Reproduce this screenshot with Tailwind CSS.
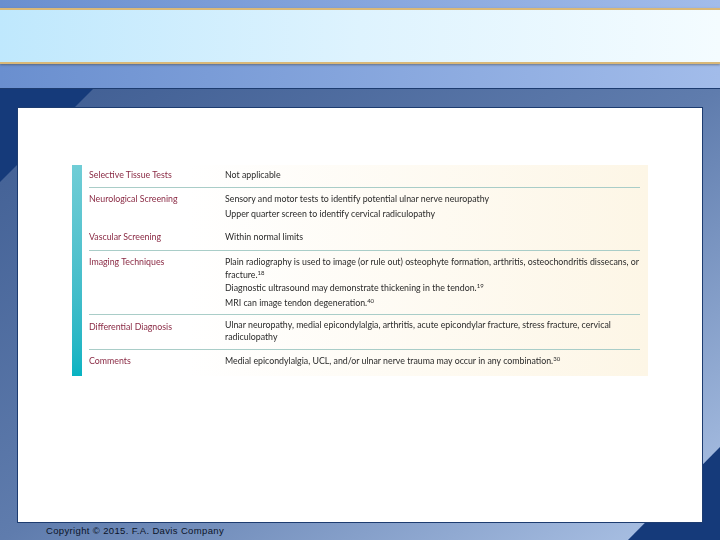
<!DOCTYPE html>
<html lang="en">
<head>
    <meta charset="UTF-8">
    <title>Slide</title>
    <script src="https://cdn.jsdelivr.net/npm/@tailwindcss/browser@4"></script>
</head>
<body class="w-[720px] h-[540px] overflow-hidden bg-white font-['Liberation_Sans',sans-serif]">
<div class="relative w-[720px] h-[540px] flex flex-col bg-linear-to-r from-[#6a8fcf] to-[#a2bcea]">
    <!-- title band -->
    <div class="h-[8px] shrink-0"></div>
    <div class="h-[56px] shrink-0 border-y-2 border-[#d9b878] bg-linear-to-r from-[#bfe8fd] via-[#def3fe] to-[#f4fcff] shadow-[0_1px_2px_rgba(60,60,60,0.5)]"></div>
    <div class="h-[24px] shrink-0"></div>

    <!-- lower panel -->
    <div class="relative flex-1 border-t border-[#1d3c70] bg-linear-to-br from-[#3f5d92] via-[#5f7cad] to-[#b0c6e8] overflow-hidden">
        <svg class="absolute inset-0" width="720" height="452" viewBox="0 0 720 452">
            <polygon points="0,0 93,0 0,93" fill="#153a7a"/>
            <polygon points="720,358 720,452 627,452" fill="#153a7a"/>
        </svg>
        <div class="relative ml-[17px] mt-[18px] w-[686px] h-[416px] bg-white border border-[#1d3c70] pt-[57px] pl-[54px]">
            <div class="flex w-[576px] h-[211px] bg-linear-to-r from-white from-20% to-[#fdf6e6]">
                <div class="w-[10px] shrink-0 bg-linear-to-b from-[#70cdd6] to-[#06b3c2]"></div>
                <div class="flex-1 pl-[7px] pr-[8px] font-['Lato',sans-serif] text-[8.8px] leading-[15px] text-[#2a2a2a] blur-[0.3px]">
                    <div class="flex h-[23px] pt-[2px] border-b border-[#a9cdc8]">
                        <div class="w-[136px] text-[#8a2a44]">Selective Tissue Tests</div>
                        <div>Not applicable</div>
                    </div>
                    <div class="flex h-[41px] pt-[3px]">
                        <div class="w-[136px] text-[#8a2a44]">Neurological Screening</div>
                        <div>Sensory and motor tests to identify potential ulnar nerve neuropathy<br>Upper quarter screen to identify cervical radiculopathy</div>
                    </div>
                    <div class="flex h-[22px] border-b border-[#a9cdc8]">
                        <div class="w-[136px] text-[#8a2a44]">Vascular Screening</div>
                        <div>Within normal limits</div>
                    </div>
                    <div class="flex h-[64px] pt-[4px] border-b border-[#a9cdc8]">
                        <div class="w-[136px] text-[#8a2a44] -mt-[1px]">Imaging Techniques</div>
                        <div class="flex-1 leading-[13px]">
                            <div>Plain radiography is used to image (or rule out) osteophyte formation, arthritis, osteochondritis dissecans, or fracture.<sup class="text-[6px] leading-none">18</sup></div>
                            <div>Diagnostic ultrasound may demonstrate thickening in the tendon.<sup class="text-[6px] leading-none">19</sup></div>
                            <div class="mt-[1.5px]">MRI can image tendon degeneration.<sup class="text-[6px] leading-none">40</sup></div>
                        </div>
                    </div>
                    <div class="flex h-[35px] pt-[4px] border-b border-[#a9cdc8]">
                        <div class="w-[136px] text-[#8a2a44]">Differential Diagnosis</div>
                        <div class="flex-1 leading-[12px]">Ulnar neuropathy, medial epicondylalgia, arthritis, acute epicondylar fracture, stress fracture, cervical radiculopathy</div>
                    </div>
                    <div class="flex pt-[3px]">
                        <div class="w-[136px] text-[#8a2a44]">Comments</div>
                        <div>Medial epicondylalgia, UCL, and/or ulnar nerve trauma may occur in any combination.<sup class="text-[6px] leading-none">30</sup></div>
                    </div>
                </div>
            </div>
        </div>
        <div class="absolute left-[46px] top-[436px] text-[9.5px] leading-[12px] tracking-[0.35px] text-[#0c1428]">Copyright © 2015. F.A. Davis Company</div>
    </div>
</div>
</body>
</html>
